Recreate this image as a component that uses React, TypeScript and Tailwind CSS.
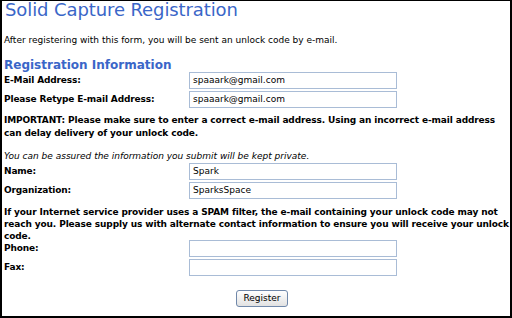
import React from "react";

const Field = ({ label, value }: { label: string; value: string }) => (
  <div className="flex items-center h-[17px]">
    <div className="w-[185px] font-bold tracking-[-0.15px]">{label}</div>
    <div className="w-[208px] h-[17px] border border-[#a9bcd6] bg-white pl-[3px] flex items-center text-[9px] leading-none">
      {value}
    </div>
  </div>
);

export default function App() {
  return (
    <div className="w-[512px] h-[318px] bg-white border-x-2 border-b-2 border-t border-black overflow-hidden text-black text-[9px] leading-[13px]" style={{ fontFamily: '"DejaVu Sans", Verdana, sans-serif' }}>
      <div className="pl-[2px]">
        <div className="text-[18px] leading-[20px] text-[#3a66c8] -mt-[1px] pl-[1px] tracking-[-0.1px]">Solid Capture Registration</div>
        <div className="mt-[14px] leading-[12.5px]">After registering with this form, you will be sent an unlock code by e-mail.</div>
        <div className="mt-[11px] text-[12px] leading-[14px] font-bold text-[#3a66c8]">Registration Information</div>
        <div className="flex flex-col gap-[2px]">
          <Field label="E-Mail Address:" value="spaaark@gmail.com" />
          <Field label="Please Retype E-mail Address:" value="spaaark@gmail.com" />
        </div>
        <div className="mt-[6px] font-bold tracking-[-0.12px]">IMPORTANT: Please make sure to enter a correct e-mail address. Using an incorrect e-mail address can delay delivery of your unlock code.</div>
        <div className="mt-[10px] italic">You can be assured the information you submit will be kept private.</div>
        <div className="flex flex-col gap-[2px]">
          <Field label="Name:" value="Spark" />
          <Field label="Organization:" value="SparksSpace" />
        </div>
        <div className="mt-[7px] font-bold leading-[12px] tracking-[-0.12px]">If your Internet service provider uses a SPAM filter, the e-mail containing your unlock code may not reach you. Please supply us with alternate contact information to ensure you will receive your unlock code.</div>
        <div className="flex flex-col gap-[2px] -mt-[2px]">
          <Field label="Phone:" value="" />
          <Field label="Fax:" value="" />
        </div>
        <div className="flex justify-center mt-[14px] pl-[10px]">
          <button className="h-[17px] w-[52px] border border-[#7088aa] rounded-[3px] bg-gradient-to-b from-white to-[#e2e2e2] text-[9px] leading-none">Register</button>
        </div>
      </div>
    </div>
  );
}
